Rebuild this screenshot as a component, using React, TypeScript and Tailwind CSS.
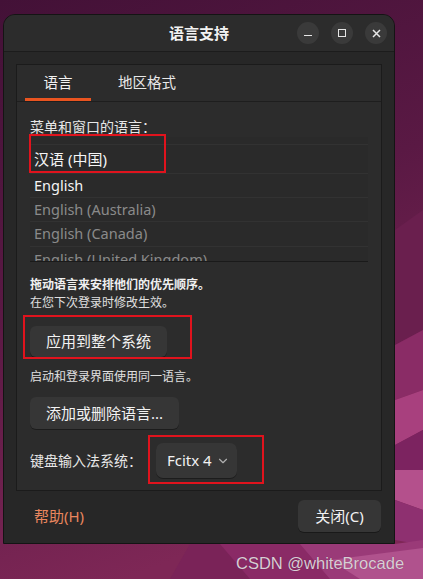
import React from "react";
import { ChevronDown } from "lucide-react";

const FONT = { fontFamily: '"Noto Sans", "Noto Sans CJK SC", sans-serif' };

function Wallpaper() {
  return (
    <svg className="absolute inset-0" width="423" height="579" viewBox="0 0 423 579">
      <defs>
        <linearGradient id="bg" x1="0" y1="0" x2="0.3" y2="1">
          <stop offset="0" stopColor="#431137" />
          <stop offset="0.5" stopColor="#5a1944" />
          <stop offset="1" stopColor="#7e2756" />
        </linearGradient>
      </defs>
      <rect width="423" height="579" fill="url(#bg)" />
      <polygon points="395,230 423,210 423,330 395,345" fill="#6a1f4e" />
      <polygon points="395,345 423,330 423,390 395,400" fill="#8a2c66" />
      <polygon points="395,400 423,390 423,430 395,445" fill="#a8407e" />
      <polygon points="395,445 423,430 423,470 395,470" fill="#7c2360" />
      <polygon points="395,470 423,470 423,510 395,500" fill="#b4508c" />
      <polygon points="395,500 423,510 423,545 395,540" fill="#8e3070" />
      <polygon points="190,544 260,544 300,579 170,579" fill="#7a2358" />
      <polygon points="220,544 330,544 360,579 250,579" fill="#8a2a66" />
      <polygon points="300,544 395,544 423,540 423,579 330,579" fill="#9a3a78" />
      <polygon points="330,560 423,548 423,579 360,579" fill="#b0528d" />
    </svg>
  );
}

function Btn({ children, w, h }: { children: React.ReactNode; w: string; h: string }) {
  return (
    <div
      className={`${w} ${h} flex items-center justify-center rounded-[6px] bg-[#363636] text-[15px] text-[#f2f2f2] shadow-[0_1px_0_rgba(0,0,0,0.35)]`}
    >
      {children}
    </div>
  );
}

export default function App() {
  return (
    <div className="relative w-[423px] h-[579px] overflow-hidden" style={FONT}>
      <Wallpaper />

      {/* Window */}
      <div className="relative ml-[3px] mt-[14px] w-[392px] h-[530px] rounded-t-[12px] border border-[#141414] bg-[#272727] flex flex-col overflow-hidden">
        {/* Title bar */}
        <div className="h-[37px] shrink-0 grid grid-cols-[1fr_auto_1fr] items-center bg-[#2c2c2c] border-b border-[#1c1c1c]">
          <div />
          <div className="text-[15px] font-bold text-[#f2f2f2]">语言支持</div>
          <div className="flex justify-end gap-3 pr-[7px]">
            <div className="w-[22px] h-[22px] rounded-full bg-[#3a3a3a] flex items-center justify-center">
              <div className="w-[8px] h-[1.5px] bg-[#e6e6e6] mt-[5px]" />
            </div>
            <div className="w-[22px] h-[22px] rounded-full bg-[#3a3a3a] flex items-center justify-center">
              <div className="w-[8px] h-[8px] border-[1.5px] border-[#e6e6e6]" />
            </div>
            <div className="w-[22px] h-[22px] rounded-full bg-[#3a3a3a] flex items-center justify-center">
              <svg width="9" height="9" viewBox="0 0 9 9">
                <path d="M1 1 L8 8 M8 1 L1 8" stroke="#e6e6e6" strokeWidth="1.5" />
              </svg>
            </div>
          </div>
        </div>

        {/* Panel */}
        <div className="mx-[12px] mt-[12px] h-[427px] shrink-0 border border-[#1b1b1b] bg-[#2c2c2c] flex flex-col">
          {/* Tabs */}
          <div className="h-[37px] shrink-0 border-b border-[#1e1e1e] flex pl-2 text-[14.5px]">
            <div className="w-[66px] flex items-center justify-center border-b-[3px] border-[#e95420] text-[#f2f2f2] pt-[3px]">
              语言
            </div>
            <div className="ml-[15px] w-[82px] flex items-center justify-center text-[#e8e8e8]">地区格式</div>
          </div>

          <div className="px-[13px] flex flex-col">
            <div className="pt-[15px] h-[35px] leading-[20px] text-[14px] text-[#e8e8e8]">菜单和窗口的语言：</div>

            {/* List */}
            <div className="h-[125px] overflow-hidden border-b border-[#1a1a1a] bg-[#2a2a2a]">
              <div className="h-[8px] border-b border-[#323232]" />
              <div className="h-[29px] border-b border-[#323232] flex items-center px-1 text-[15px] text-[#f5f5f5]">
                汉语 (中国)
              </div>
              <div className="h-[24px] border-b border-[#323232] flex items-center px-1 text-[14.5px] text-[#f5f5f5]">
                English
              </div>
              <div className="h-[24px] border-b border-[#323232] flex items-center px-1 text-[14.5px] text-[#8a8a8a]">
                English (Australia)
              </div>
              <div className="h-[25px] border-b border-[#323232] flex items-center px-1 text-[14.5px] text-[#8a8a8a]">
                English (Canada)
              </div>
              <div className="h-[24px] flex items-start pt-[2px] px-1 text-[14.5px] leading-[20px] text-[#8a8a8a]">
                English (United Kingdom)
              </div>
            </div>

            <div className="mt-[14px] leading-[18px] text-[12px] font-bold text-[#f0f0f0]">
              拖动语言来安排他们的优先顺序。
            </div>
            <div className="leading-[18px] text-[12px] text-[#e0e0e0]">在您下次登录时修改生效。</div>

            <div className="mt-[14px]">
              <Btn w="w-[137px]" h="h-[31px]">应用到整个系统</Btn>
            </div>

            <div className="mt-[11px] leading-[18px] text-[12px] text-[#e0e0e0]">启动和登录界面使用同一语言。</div>

            <div className="mt-[11px]">
              <Btn w="w-[149px]" h="h-[32px]">添加或删除语言...</Btn>
            </div>

            <div className="mt-[14px] flex items-center gap-[14px]">
              <div className="text-[14px] text-[#e8e8e8]">键盘输入法系统：</div>
              <div className="w-[81px] h-[35px] rounded-[7px] bg-[#363636] flex items-center pl-[11px] gap-[4px] text-[15px] text-[#f2f2f2] shadow-[0_1px_0_rgba(0,0,0,0.35)]">
                <span>Fcitx 4</span>
                <ChevronDown size={14} color="#b0b0b0" strokeWidth={2} />
              </div>
            </div>
          </div>
        </div>

        {/* Footer */}
        <div className="flex-1 flex items-center justify-between pl-[30px] pr-[13px] pb-[2px]">
          <div className="text-[15px] text-[#e9865e]">帮助(H)</div>
          <Btn w="w-[83px]" h="h-[32px]">关闭(C)</Btn>
        </div>
      </div>

      {/* Red annotation boxes */}
      <div className="absolute left-[29px] top-[134px] w-[137px] h-[39px] border-2 border-[#e0131d]" />
      <div className="absolute left-[23px] top-[315px] w-[169px] h-[44px] border-2 border-[#e0131d]" />
      <div className="absolute left-[148px] top-[435px] w-[116px] h-[49px] border-2 border-[#e0131d]" />

      {/* Watermark */}
      <div
        className="absolute left-[236px] top-[552px] text-[16.5px] leading-[22px] text-[#d9cdd5]"
        style={{ fontFamily: '"Liberation Sans", Arial, sans-serif', textShadow: "0 0 1px rgba(0,0,0,0.3)" }}
      >
        CSDN @whiteBrocade
      </div>
    </div>
  );
}
